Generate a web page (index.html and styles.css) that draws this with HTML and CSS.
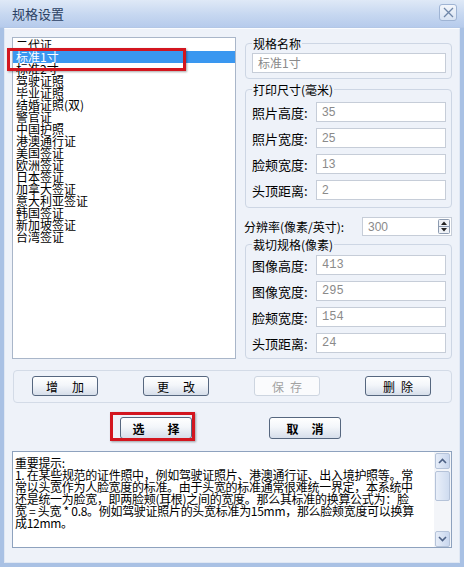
FILE: index.html
```html
<!DOCTYPE html>
<html lang="zh-CN">
<head>
    <meta charset="UTF-8">
    <title>规格设置</title>
    <link rel="stylesheet" href="styles.css">
</head>
<body>
    <div class="window">
        <div class="titlebar">
            <span class="title">规格设置</span>
            <span class="close">
                <svg width="11" height="11" viewBox="0 0 11 11"><path d="M1 1 L10 10 M10 1 L1 10" stroke="#6f86a8" stroke-width="1.3" fill="none"/></svg>
            </span>
        </div>
        <div class="client">
            <div class="top">
                <div class="list">
                    <div class="item">二代证</div>
                    <div class="item selected">标准1寸</div>
                    <div class="item">标准2寸</div>
                    <div class="item">驾驶证照</div>
                    <div class="item">毕业证照</div>
                    <div class="item">结婚证照(双)</div>
                    <div class="item">警官证</div>
                    <div class="item">中国护照</div>
                    <div class="item">港澳通行证</div>
                    <div class="item">美国签证</div>
                    <div class="item">欧洲签证</div>
                    <div class="item">日本签证</div>
                    <div class="item">加拿大签证</div>
                    <div class="item">意大利亚签证</div>
                    <div class="item">韩国签证</div>
                    <div class="item">新加坡签证</div>
                    <div class="item">台湾签证</div>
                </div>
                <div class="side">
                    <fieldset class="group name-group">
                        <legend>规格名称</legend>
                        <div class="field">标准1寸</div>
                    </fieldset>
                    <fieldset class="group print-group">
                        <legend>打印尺寸(毫米)</legend>
                        <div class="rows">
                            <div class="row"><span class="label">照片高度:</span><div class="field">35</div></div>
                            <div class="row"><span class="label">照片宽度:</span><div class="field">25</div></div>
                            <div class="row"><span class="label">脸颊宽度:</span><div class="field">13</div></div>
                            <div class="row"><span class="label">头顶距离:</span><div class="field">2</div></div>
                        </div>
                    </fieldset>
                    <div class="dpi-row">
                        <span class="dpi-label">分辨率(像素/英寸):</span>
                        <div class="field dpi-field">
                            <span>300</span>
                            <span class="spin">
                                <svg width="12" height="15" viewBox="0 0 12 15">
                                    <rect x="0.5" y="0.5" width="11" height="14" rx="1" fill="#eef1f6" stroke="#8d9bb0"/>
                                    <line x1="1" y1="7.5" x2="11" y2="7.5" stroke="#8d9bb0"/>
                                    <path d="M3 6 L6 2.5 L9 6 Z" fill="#222"/>
                                    <path d="M3 9 L6 12.5 L9 9 Z" fill="#222"/>
                                </svg>
                            </span>
                        </div>
                    </div>
                    <fieldset class="group crop-group">
                        <legend>裁切规格(像素)</legend>
                        <div class="rows">
                            <div class="row"><span class="label">图像高度:</span><div class="field mono">413</div></div>
                            <div class="row"><span class="label">图像宽度:</span><div class="field mono">295</div></div>
                            <div class="row"><span class="label">脸颊宽度:</span><div class="field mono">154</div></div>
                            <div class="row"><span class="label">头顶距离:</span><div class="field mono">24</div></div>
                        </div>
                    </fieldset>
                </div>
            </div>

            <div class="toolbar">
                <button class="btn"><span class="sp-wide">增加</span></button>
                <button class="btn"><span class="sp-wide">更改</span></button>
                <button class="btn disabled"><span class="sp-narrow">保存</span></button>
                <button class="btn"><span class="sp-narrow">删除</span></button>
            </div>

            <div class="actions">
                <div class="marked">
                    <button class="btn big"><span class="sp-select">选择</span></button>
                </div>
                <button class="btn big"><span class="sp-cancel">取消</span></button>
            </div>

            <div class="notes">
                <div class="notes-text">
                    <div>重要提示:</div>
                    <div>1. 在某些规范的证件照中，例如驾驶证照片、港澳通行证、出入境护照等。常</div>
                    <div>常以头宽作为人脸宽度的标准。由于头宽的标准通常很难统一界定，本系统中</div>
                    <div>还是统一为脸宽，即两脸颊(耳根)之间的宽度。那么其标准的换算公式为：脸</div>
                    <div>宽 = 头宽 * 0.8。例如驾驶证照片的头宽标准为15mm，那么脸颊宽度可以换算</div>
                    <div>成12mm。</div>
                </div>
                <div class="scrollbar">
                    <div class="sb-btn">
                        <svg width="9" height="6" viewBox="0 0 9 6"><path d="M1 5 L4.5 1.5 L8 5" stroke="#4d6185" stroke-width="1.6" fill="none"/></svg>
                    </div>
                    <div class="sb-thumb"></div>
                    <div class="sb-track"></div>
                    <div class="sb-btn">
                        <svg width="9" height="6" viewBox="0 0 9 6"><path d="M1 1 L4.5 4.5 L8 1" stroke="#4d6185" stroke-width="1.6" fill="none"/></svg>
                    </div>
                </div>
            </div>
        </div>
    </div>
</body>
</html>
```

FILE: styles.css
```css
* {
    box-sizing: border-box;
}

body {
    margin: 0;
    font-family: "Noto Sans CJK SC", "Liberation Sans", sans-serif;
    font-size: 12px;
    color: #000;
}

.window {
    width: 464px;
    height: 567px;
    display: flex;
    flex-direction: column;
    background: #a9c1e4;
    padding: 0 4px 4px;
}

.titlebar {
    height: 28px;
    margin: 0 -4px;
    display: flex;
    align-items: center;
    justify-content: space-between;
    padding: 0 7px 0 12px;
    background: linear-gradient(#dfe9f7, #c6d7f0 55%, #b6cbec);
    border-bottom: 1px solid #b3c7e6;
}

.title {
    font-size: 13px;
    color: #2b3f63;
}

.close {
    width: 18px;
    height: 17px;
    margin-top: -2px;
    display: flex;
    align-items: center;
    justify-content: center;
    border: 1px solid #9fb4d4;
    border-radius: 3px;
    background: linear-gradient(#f3f6fb, #d8e3f3);
}

.client {
    flex: 1;
    background: #eef2f9;
    border: 1px solid #dfe7f3;
    border-top-color: #fbfcfe;
    padding: 8px 7px 0 7px;
}

.top {
    display: flex;
    gap: 9px;
}

.list {
    width: 224px;
    height: 322px;
    background: #fff;
    border: 1px solid #a9b6c9;
    padding-top: 1px;
}

.item {
    height: 12px;
    line-height: 12px;
    padding-left: 3px;
    white-space: nowrap;
}

.item.selected {
    position: relative;
    background: #3a97f0;
    color: #fff;
}

.item.selected::after {
    content: "";
    position: absolute;
    top: -3px;
    left: -6px;
    width: 173px;
    height: 17px;
    border: 3px solid #d3161f;
    box-shadow: 1px 1px 2px rgba(0, 0, 0, 0.35);
}

.side {
    width: 207px;
    display: flex;
    flex-direction: column;
}

.group {
    margin: 0;
    min-width: 0;
    border: 1px solid #cdd6e4;
    border-radius: 4px;
    padding: 3px 5px 5px 6px;
}

.group legend {
    padding: 0 1px;
    font-size: 12px;
    line-height: 13px;
}

.print-group {
    margin-top: 4px;
    padding-top: 6px;
    padding-bottom: 7px;
}

.crop-group {
    margin-top: 2px;
    padding-top: 4px;
}

.rows {
    display: flex;
    flex-direction: column;
    gap: 6px;
}

.row {
    display: flex;
    align-items: center;
}

.label {
    width: 64px;
    font-size: 13px;
}

.field {
    flex: 1;
    height: 20px;
    line-height: 18px;
    background: #fff;
    border: 1px solid #c6cdd8;
    color: #8a8a8a;
    padding-left: 5px;
    font-family: "Liberation Sans", sans-serif;
}

.name-group .field {
    font-family: "Noto Sans CJK SC", sans-serif;
}

.field.mono {
    font-family: "Liberation Mono", monospace;
}

.dpi-row {
    display: flex;
    align-items: center;
    justify-content: space-between;
    margin-top: 9px;
    margin-left: -1px;
}

.dpi-label {
    font-size: 12px;
}

.dpi-field {
    flex: none;
    width: 90px;
    height: 19px;
    display: flex;
    align-items: center;
    justify-content: space-between;
    padding-right: 1px;
}

.spin {
    display: flex;
}

.toolbar {
    margin-top: 11px;
    margin-left: 1px;
    width: 439px;
    height: 33px;
    border: 1px solid #d3dbe7;
    border-radius: 4px;
    display: flex;
    align-items: flex-start;
    gap: 45px;
    padding: 5px 0 0 18px;
}

.btn {
    width: 66px;
    height: 20px;
    padding: 0;
    border: 1px solid #56677f;
    border-radius: 3px;
    background: linear-gradient(#ffffff, #f3f6fa 45%, #d6deea);
    font-family: "Noto Sans CJK SC", sans-serif;
    font-size: 12px;
    color: #000;
    display: flex;
    align-items: center;
    justify-content: center;
    white-space: nowrap;
}

.btn span {
    white-space: nowrap;
}

.btn.disabled {
    border-color: #cdd5e0;
    background: #fafbfd;
    color: #a3a3a3;
}

.sp-wide {
    letter-spacing: 14px;
    padding-left: 14px;
}

.sp-narrow {
    letter-spacing: 6px;
    padding-left: 6px;
}

.actions {
    margin-top: 14px;
    display: flex;
    gap: 77px;
    padding-left: 108px;
}

.btn.big {
    width: 72px;
    height: 22px;
    font-weight: bold;
}

.sp-select {
    letter-spacing: 23px;
    padding-left: 23px;
}

.sp-cancel {
    letter-spacing: 13px;
    padding-left: 13px;
}

.marked {
    position: relative;
}

.marked::after {
    content: "";
    position: absolute;
    top: -5px;
    left: -10px;
    right: -3px;
    bottom: -2px;
    border: 3px solid #d3161f;
    box-shadow: 1px 1px 2px rgba(0, 0, 0, 0.35);
}

.notes {
    margin-top: 12px;
    width: 440px;
    height: 97px;
    background: #fff;
    border: 1px solid #8ea2be;
    display: flex;
}

.notes-text {
    flex: 1;
    padding: 5px 0 0 2px;
    line-height: 12px;
    font-size: 12px;
    letter-spacing: -0.3px;
    white-space: nowrap;
    overflow: hidden;
}

.scrollbar {
    width: 17px;
    display: flex;
    flex-direction: column;
    background: #f3f5f9;
    padding: 1px 0 0 0;
}

.sb-btn {
    height: 16px;
    margin: 0 1px;
    border: 1px solid #b5c3d9;
    border-radius: 2px;
    background: linear-gradient(90deg, #e6edf8, #c9d7ee);
    display: flex;
    align-items: center;
    justify-content: center;
}

.sb-thumb {
    height: 30px;
    margin: 2px 1px 0;
    border: 1px solid #b5c3d9;
    border-radius: 2px;
    background: linear-gradient(90deg, #e9eff9, #cfdcf0);
}

.sb-track {
    flex: 1;
}
```
